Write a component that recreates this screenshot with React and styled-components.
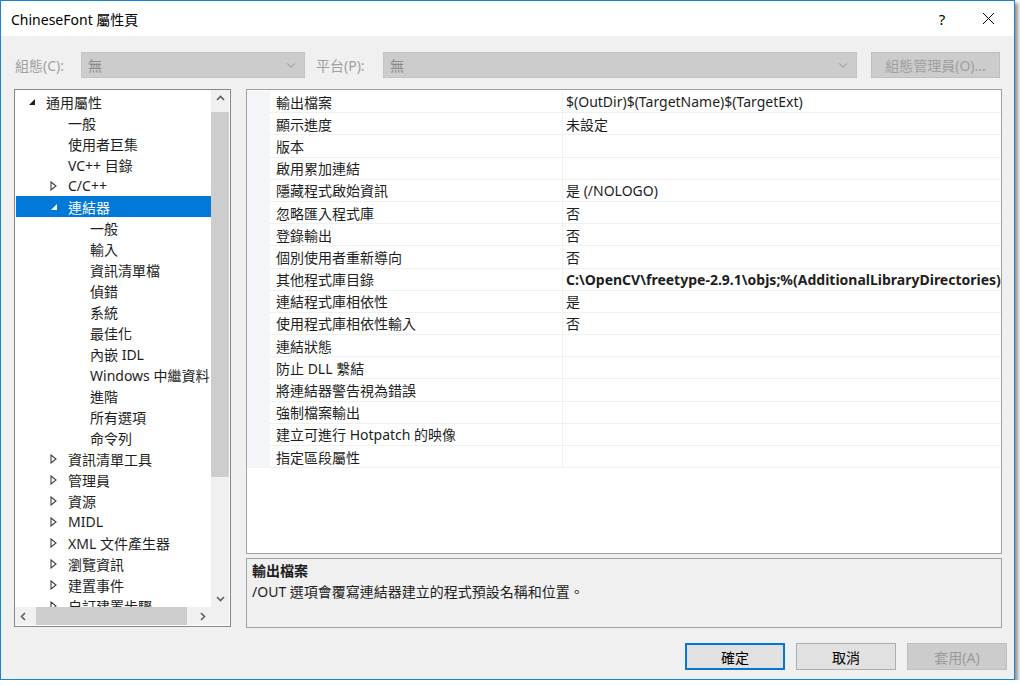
import React from 'react'
import styled, { createGlobalStyle, css } from 'styled-components'

const FONT = `"Segoe UI", "Noto Sans", "Noto Sans CJK TC", sans-serif`

const GlobalStyle = createGlobalStyle`
  html, body {
    margin: 0;
    padding: 0;
    background: #ffffff;
  }
  body {
    font-family: ${FONT};
    font-size: 14px;
    color: #1e1e1e;
  }
  * { box-sizing: border-box; }
`

const treeItems = [
  { label: '通用屬性', level: 0, arrow: 'open' },
  { label: '一般', level: 1 },
  { label: '使用者巨集', level: 1 },
  { label: 'VC++ 目錄', level: 1 },
  { label: 'C/C++', level: 1, arrow: 'closed' },
  { label: '連結器', level: 1, arrow: 'open', selected: true },
  { label: '一般', level: 2 },
  { label: '輸入', level: 2 },
  { label: '資訊清單檔', level: 2 },
  { label: '偵錯', level: 2 },
  { label: '系統', level: 2 },
  { label: '最佳化', level: 2 },
  { label: '內嵌 IDL', level: 2 },
  { label: 'Windows 中繼資料', level: 2 },
  { label: '進階', level: 2 },
  { label: '所有選項', level: 2 },
  { label: '命令列', level: 2 },
  { label: '資訊清單工具', level: 1, arrow: 'closed' },
  { label: '管理員', level: 1, arrow: 'closed' },
  { label: '資源', level: 1, arrow: 'closed' },
  { label: 'MIDL', level: 1, arrow: 'closed' },
  { label: 'XML 文件產生器', level: 1, arrow: 'closed' },
  { label: '瀏覽資訊', level: 1, arrow: 'closed' },
  { label: '建置事件', level: 1, arrow: 'closed' },
  { label: '自訂建置步驟', level: 1, arrow: 'closed' },
]

const props = [
  ['輸出檔案', '$(OutDir)$(TargetName)$(TargetExt)'],
  ['顯示進度', '未設定'],
  ['版本', ''],
  ['啟用累加連結', ''],
  ['隱藏程式啟始資訊', '是 (/NOLOGO)'],
  ['忽略匯入程式庫', '否'],
  ['登錄輸出', '否'],
  ['個別使用者重新導向', '否'],
  ['其他程式庫目錄', 'C:\\OpenCV\\freetype-2.9.1\\objs;%(AdditionalLibraryDirectories)', true],
  ['連結程式庫相依性', '是'],
  ['使用程式庫相依性輸入', '否'],
  ['連結狀態', ''],
  ['防止 DLL 繫結', ''],
  ['將連結器警告視為錯誤', ''],
  ['強制檔案輸出', ''],
  ['建立可進行 Hotpatch 的映像', ''],
  ['指定區段屬性', ''],
]

const Window = styled.div`
  width: 1015px;
  height: 680px;
  border: 1px solid #1883d7;
  background: #f0f0f0;
  box-shadow: 3px 3px 4px rgba(0, 0, 0, 0.45);
  display: flex;
  flex-direction: column;
`

const TitleBar = styled.div`
  height: 35px;
  flex-shrink: 0;
  background: #ffffff;
  display: flex;
  align-items: center;
  padding-left: 10px;
`

const Title = styled.div`
  flex: 1;
  font-size: 14px;
  color: #000;
`

const CaptionButton = styled.div`
  width: 46px;
  height: 35px;
  display: flex;
  align-items: center;
  justify-content: center;
  font-size: 15px;
  color: #000;
`

const Body = styled.div`
  padding: 0 12px 0 13px;
`

const ConfigRow = styled.div`
  margin-top: 16px;
  height: 26px;
  display: flex;
  align-items: center;
`

const ConfigLabel = styled.div`
  width: 67px;
  padding-left: ${p => p.$pad || 0}px;
  margin-left: ${p => p.$gap || 0}px;
  color: #a0a0a0;
`

const Combo = styled.div`
  width: ${p => p.$w}px;
  height: 26px;
  background: #cccccc;
  border: 1px solid #c4c4c4;
  display: flex;
  align-items: center;
  padding: 0 8px 0 6px;
  color: #8a8a8a;
  span { flex: 1; }
`

const DisabledButton = styled.div`
  margin-left: 14px;
  width: 129px;
  height: 26px;
  background: #cccccc;
  border: 1px solid #bfbfbf;
  color: #a0a0a0;
  display: flex;
  align-items: center;
  justify-content: center;
`

const Main = styled.div`
  margin-top: 11px;
  display: flex;
  gap: 15px;
`

const Tree = styled.div`
  width: 217px;
  height: 538px;
  border: 1px solid #828790;
  background: #ffffff;
  display: grid;
  grid-template-columns: 1fr 18px;
  grid-template-rows: 1fr 18px;
  padding: 0 1px 1px 0;
`

const TreeContent = styled.div`
  overflow: hidden;
  padding-top: 1px;
`

const TreeRow = styled.div`
  height: 21px;
  display: flex;
  align-items: center;
  white-space: nowrap;
  padding-left: ${p => 10 + p.$level * 22}px;
  margin-left: 1px;
  ${p => p.$selected && css`
    background: #0078d7;
    color: #ffffff;
  `}
`

const ArrowSlot = styled.div`
  width: 20px;
  flex-shrink: 0;
  display: flex;
  align-items: center;
  padding-left: 2px;
`

const VScroll = styled.div`
  background: #f0f0f0;
  display: flex;
  flex-direction: column;
`

const HScroll = styled.div`
  background: #f0f0f0;
  display: flex;
`

const ScrollArrow = styled.div`
  width: ${p => (p.$h ? 17 : 18)}px;
  height: ${p => (p.$h ? 18 : 17)}px;
  flex-shrink: 0;
  display: flex;
  align-items: center;
  justify-content: center;
`

const VThumb = styled.div`
  margin-top: 5px;
  height: 365px;
  background: #cdcdcd;
`

const HThumb = styled.div`
  margin-left: 4px;
  width: 151px;
  background: #cdcdcd;
`

const Spacer = styled.div`
  flex: 1;
`

const Corner = styled.div`
  background: #f0f0f0;
`

const RightCol = styled.div`
  width: 756px;
  display: flex;
  flex-direction: column;
  gap: 4px;
`

const PropGrid = styled.div`
  height: 465px;
  border: 1px solid #a0a0a0;
  background: #ffffff;
  padding-top: 1px;
`

const PropRow = styled.div`
  height: 22.2px;
  display: grid;
  grid-template-columns: 23px 293px 1fr;
`

const Gutter = styled.div`
  background: #f4f5f8;
`

const Cell = styled.div`
  border-bottom: 1px solid #f0f0f0;
  display: flex;
  align-items: center;
  white-space: nowrap;
  overflow: hidden;
  padding-left: ${p => (p.$value ? 3 : 6)}px;
  ${p => p.$value === false && css`border-right: 1px solid #f0f0f0;`}
  font-weight: ${p => (p.$bold ? 700 : 400)};
`

const Description = styled.div`
  height: 70px;
  border: 1px solid #a0a0a0;
  background: #f0f0f0;
  padding: 1px 5px;
  line-height: 21px;
`

const DescTitle = styled.div`
  font-weight: 700;
`

const Footer = styled.div`
  margin-top: 15px;
  padding-right: 7px;
  display: flex;
  justify-content: flex-end;
  gap: 11px;
`

const DialogButton = styled.div`
  width: 100px;
  height: 27px;
  display: flex;
  align-items: center;
  justify-content: center;
  background: ${p => (p.$disabled ? '#cccccc' : '#e1e1e1')};
  border: ${p => (p.$default ? '2px solid #0078d7' : p.$disabled ? '1px solid #bfbfbf' : '1px solid #adadad')};
  color: ${p => (p.$disabled ? '#9a9a9a' : '#000')};
`

const OpenArrow = ({ color }) => (
  <svg width="8" height="8" viewBox="0 0 8 8">
    <polygon points="7,1 7,7 1,7" fill={color} />
  </svg>
)

const ClosedArrow = () => (
  <svg width="7" height="10" viewBox="0 0 7 10">
    <polygon points="1,1 6,5 1,9" fill="none" stroke="#404040" strokeWidth="1.1" />
  </svg>
)

const Chevron = ({ dir = 'down', color = '#5d5d5d', size = 9, width = 1.6 }) => {
  const pts = {
    up: '1,6 4.5,2.5 8,6',
    down: '1,3 4.5,6.5 8,3',
    left: '6,1 2.5,4.5 6,8',
    right: '3,1 6.5,4.5 3,8',
  }[dir]
  return (
    <svg width={size} height={size} viewBox="0 0 9 9">
      <polyline points={pts} fill="none" stroke={color} strokeWidth={width} />
    </svg>
  )
}

const CloseIcon = () => (
  <svg width="13" height="13" viewBox="0 0 13 13">
    <path d="M1 1 L12 12 M12 1 L1 12" stroke="#000" strokeWidth="1" />
  </svg>
)

export default function App() {
  return (
    <>
      <GlobalStyle />
      <Window>
        <TitleBar>
          <Title>ChineseFont 屬性頁</Title>
          <CaptionButton>?</CaptionButton>
          <CaptionButton>
            <CloseIcon />
          </CaptionButton>
          <div style={{ width: 3 }} />
        </TitleBar>

        <Body>
          <ConfigRow>
            <ConfigLabel $pad={1}>組態(C):</ConfigLabel>
            <Combo $w={224}>
              <span>無</span>
              <Chevron color="#a8a8a8" width={1} size={10} />
            </Combo>
            <ConfigLabel $gap={11}>平台(P):</ConfigLabel>
            <Combo $w={474}>
              <span>無</span>
              <Chevron color="#a8a8a8" width={1} size={10} />
            </Combo>
            <DisabledButton>組態管理員(O)...</DisabledButton>
          </ConfigRow>

          <Main>
            <Tree>
              <TreeContent>
                {treeItems.map((item, i) => (
                  <TreeRow key={i} $level={item.level} $selected={item.selected}>
                    <ArrowSlot>
                      {item.arrow === 'open' && <OpenArrow color={item.selected ? '#fff' : '#1e1e1e'} />}
                      {item.arrow === 'closed' && <ClosedArrow />}
                    </ArrowSlot>
                    {item.label}
                  </TreeRow>
                ))}
              </TreeContent>
              <VScroll>
                <ScrollArrow><Chevron dir="up" /></ScrollArrow>
                <VThumb />
                <Spacer />
                <ScrollArrow><Chevron dir="down" /></ScrollArrow>
              </VScroll>
              <HScroll>
                <ScrollArrow $h><Chevron dir="left" /></ScrollArrow>
                <HThumb />
                <Spacer />
                <ScrollArrow $h><Chevron dir="right" /></ScrollArrow>
              </HScroll>
              <Corner />
            </Tree>

            <RightCol>
              <PropGrid>
                {props.map(([name, value, bold], i) => (
                  <PropRow key={i}>
                    <Gutter />
                    <Cell $value={false}>{name}</Cell>
                    <Cell $value={true} $bold={bold}>{value}</Cell>
                  </PropRow>
                ))}
              </PropGrid>
              <Description>
                <DescTitle>輸出檔案</DescTitle>
                <div>/OUT 選項會覆寫連結器建立的程式預設名稱和位置。</div>
              </Description>
            </RightCol>
          </Main>
        </Body>

        <Footer>
          <DialogButton $default>確定</DialogButton>
          <DialogButton>取消</DialogButton>
          <DialogButton $disabled>套用(A)</DialogButton>
        </Footer>
      </Window>
    </>
  )
}
